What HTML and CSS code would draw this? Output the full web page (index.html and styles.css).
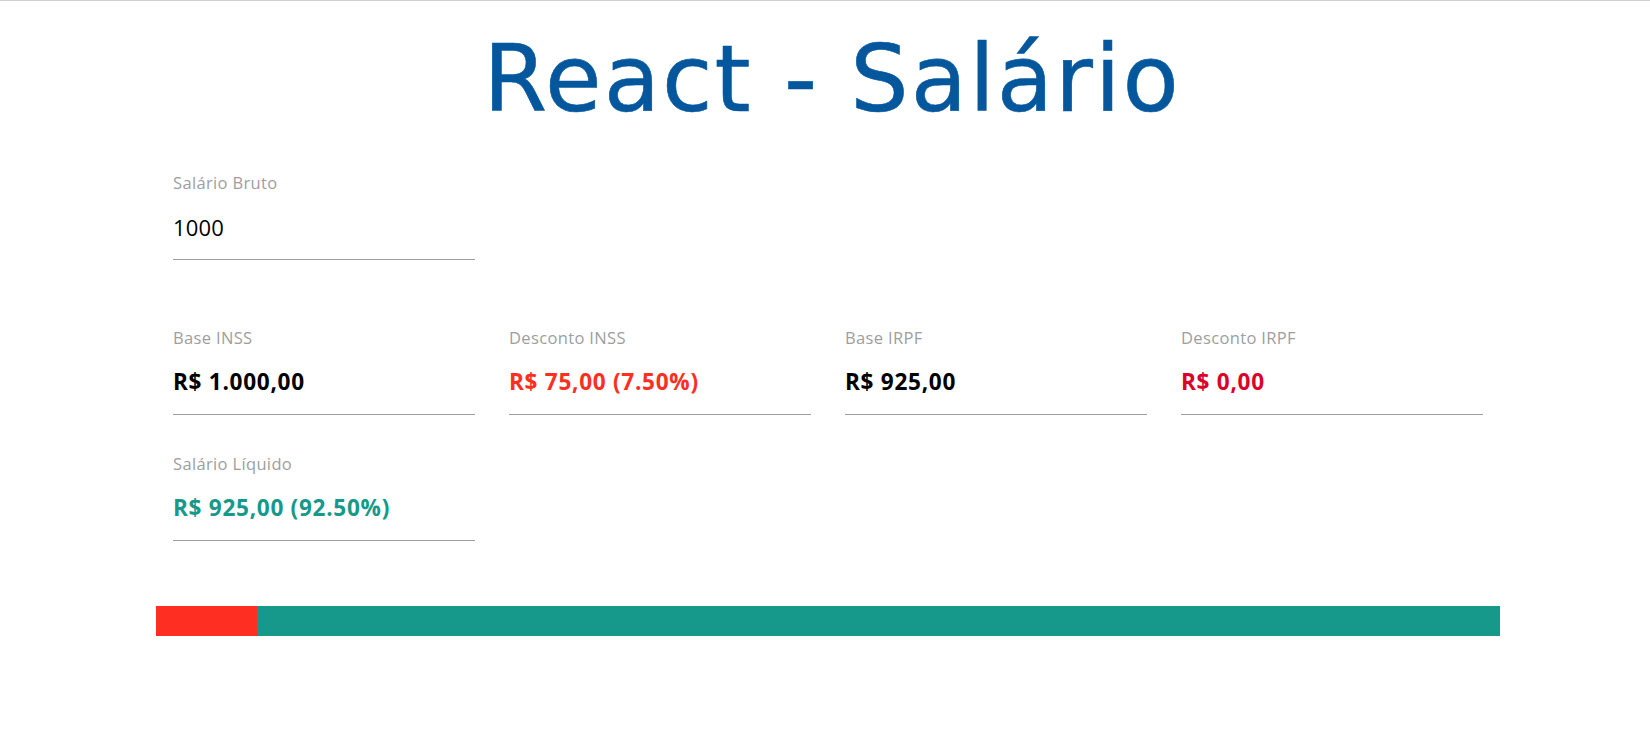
FILE: index.html
```html
<!DOCTYPE html>
<html lang="pt-BR">
<head>
<meta charset="utf-8">
<title>React - Salário</title>
<link rel="stylesheet" href="styles.css">
</head>
<body>
<div class="page">
  <div class="container">
    <h1 class="title">React - Salário</h1>

    <div class="grid first">
      <div class="field">
        <label class="label">Salário Bruto</label>
        <div class="input">1000</div>
      </div>
    </div>

    <div class="grid results">
      <div class="field">
        <label class="label">Base INSS</label>
        <div class="value">R$ 1.000,00</div>
      </div>
      <div class="field">
        <label class="label">Desconto INSS</label>
        <div class="value red">R$ 75,00 (7.50%)</div>
      </div>
      <div class="field">
        <label class="label">Base IRPF</label>
        <div class="value">R$ 925,00</div>
      </div>
      <div class="field">
        <label class="label">Desconto IRPF</label>
        <div class="value crimson">R$ 0,00</div>
      </div>
      <div class="field">
        <label class="label">Salário Líquido</label>
        <div class="value green">R$ 925,00 (92.50%)</div>
      </div>
    </div>

    <div class="bar">
      <div class="seg seg-inss" style="width: 7.5%"></div>
      <div class="seg seg-irpf" style="width: 0%"></div>
      <div class="seg seg-net" style="width: 92.5%"></div>
    </div>
  </div>
</div>
</body>
</html>
```

FILE: styles.css
```css
html, body {
  margin: 0;
  padding: 0;
  background: #ffffff;
}

.page {
  border-top: 1px solid #d0d0d0;
  min-height: 731px;
}

.container {
  width: 1344px;
  margin-left: 156px;
}

.title {
  margin: 0;
  padding-top: 29px;
  padding-left: 8px;
  height: 100px;
  font-family: "DejaVu Sans", "Open Sans", sans-serif;
  font-weight: 400;
  font-size: 92px;
  line-height: 100px;
  letter-spacing: 2px;
  color: #05579d;
  text-align: center;
  -webkit-text-stroke: 0.6px #05579d;
}

.grid {
  display: grid;
  grid-template-columns: repeat(4, 336px);
}

.first {
  margin-top: 43px;
}

.results {
  margin-top: 68px;
  row-gap: 39px;
}

.field {
  padding: 0 17px;
}

.field > .label,
.field > .input,
.field > .value {
  display: block;
}

.label {
  font-family: "Open Sans", "Noto Sans", sans-serif;
  font-size: 16.5px;
  line-height: 20px;
  letter-spacing: 0.35px;
  color: #9e9e9e;
}

.input,
.value {
  margin-top: 19px;
  height: 30px;
  padding-bottom: 17px;
  border-bottom: 1px solid #9e9e9e;
  line-height: 30px;
  font-family: "Open Sans", "Noto Sans", sans-serif;
  color: #000000;
}

.input {
  font-size: 22px;
  font-weight: 400;
  letter-spacing: 0.2px;
}

.value {
  font-size: 22.6px;
  font-weight: 700;
  letter-spacing: 0.7px;
}

.red { color: #ff2e22; }
.crimson { color: #dd0029; }
.green { color: #16998a; }

.bar {
  margin-top: 65px;
  height: 30px;
  display: flex;
}

.seg { height: 100%; }
.seg-inss { background: #ff2e22; }
.seg-irpf { background: #dd0029; }
.seg-net { background: #16998a; }
```
